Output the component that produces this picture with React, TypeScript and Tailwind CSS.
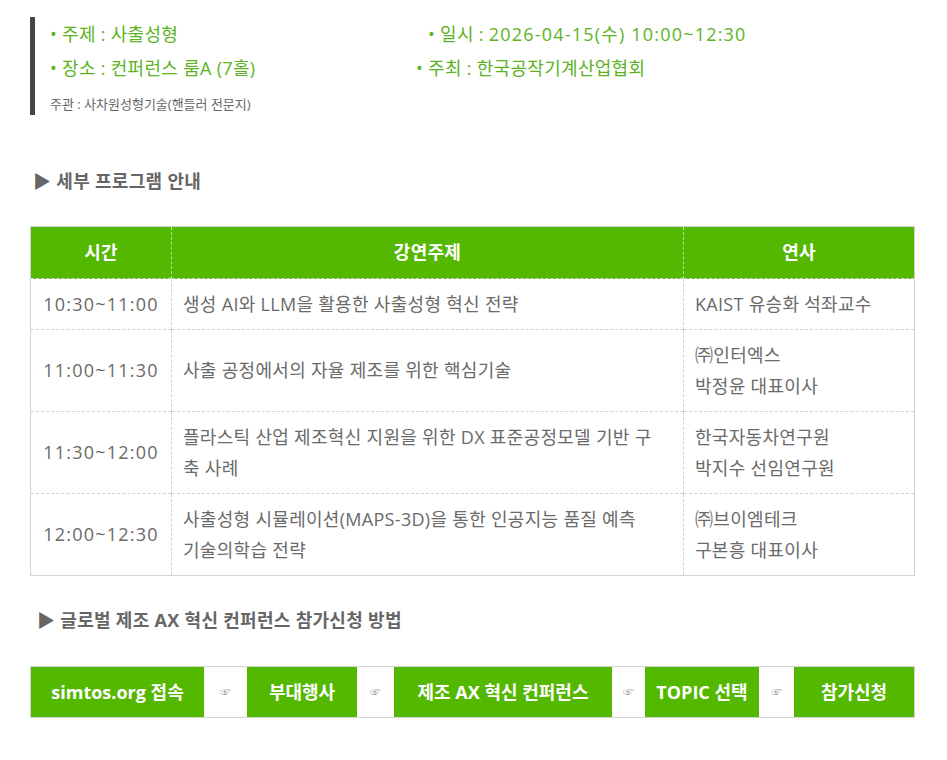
import React from "react";

const font = "font-['Open_Sans','Noto_Sans_CJK_KR',sans-serif]";

const rows = [
  { time: "10:30~11:00", topic: ["생성 AI와 LLM을 활용한 사출성형 혁신 전략"], speaker: ["KAIST 유승화 석좌교수"], h: "h-[51px]" },
  { time: "11:00~11:30", topic: ["사출 공정에서의 자율 제조를 위한 핵심기술"], speaker: ["㈜인터엑스", "박정윤 대표이사"], h: "h-[82px]" },
  { time: "11:30~12:00", topic: ["플라스틱 산업 제조혁신 지원을 위한 DX 표준공정모델 기반 구", "축 사례"], speaker: ["한국자동차연구원", "박지수 선임연구원"], h: "h-[82px]" },
  { time: "12:00~12:30", topic: ["사출성형 시뮬레이션(MAPS-3D)을 통한 인공지능 품질 예측", "기술의학습 전략"], speaker: ["㈜브이엠테크", "구본흥 대표이사"], h: "h-[82px]" },
];

const steps = [
  { label: "simtos.org 접속", w: "w-[173px]" },
  { label: "부대행사", w: "w-[110px]" },
  { label: "제조 AX 혁신 컨퍼런스", w: "w-[218px]" },
  { label: "TOPIC 선택", w: "w-[114px]" },
  { label: "참가신청", w: "flex-1" },
];
const gaps = ["w-[43px]", "w-[37px]", "w-[33px]", "w-[35px]"];

export default function App() {
  return (
    <div className={`${font} bg-white w-[947px] min-h-[760px] pt-[17px] px-[30px] text-[#6a6a6a]`}>
      {/* info box */}
      <div className="border-l-[5px] border-[#464646] pl-[15px] h-[98px] flex flex-col">
        <div className="flex mt-[5px] leading-[24px] text-[18px] text-[#5cb31f] tracking-[0.3px]">
          <span className="w-[378px]">• 주제 : 사출성형</span>
          <span>
            • 일시 : <span className="tracking-[1.2px]">2026-04-15(수) 10:00~12:30</span>
          </span>
        </div>
        <div className="flex mt-[10px] leading-[24px] text-[18px] text-[#5cb31f] tracking-[0.3px]">
          <span className="w-[366px]">• 장소 : 컨퍼런스 룸A (7홀)</span>
          <span>• 주최 : 한국공작기계산업협회</span>
        </div>
        <div className="text-[13px] text-[#666] mt-[17px] leading-[14px]">주관 : 사차원성형기술(핸들러 전문지)</div>
      </div>

      <h3 className="mt-[56px] text-[18px] font-bold text-[#666] leading-[20px] pl-[3px] tracking-[0.3px]">▶ 세부 프로그램 안내</h3>

      {/* program table */}
      <table className="mt-[35px] w-[885px] border-collapse border border-[#d3d3d3] text-[18px] tracking-[0.3px]">
        <thead>
          <tr className="bg-[#54b700] text-white h-[52px]">
            <th className="w-[141px] font-bold text-[18px] border-r border-dashed border-[#b8e08f]">시간</th>
            <th className="w-[512px] font-bold text-[18px] border-r border-dashed border-[#b8e08f]">강연주제</th>
            <th className="font-bold text-[18px]">연사</th>
          </tr>
        </thead>
        <tbody>
          {rows.map((r) => (
            <tr key={r.time} className={`${r.h} border-t border-dashed border-[#d3d3d3]`}>
              <td className="text-center border-r border-dashed border-[#d3d3d3] tracking-[1.2px]">{r.time}</td>
              <td className="px-[11px] border-r border-dashed border-[#d3d3d3] leading-[31px]">
                {r.topic.map((t) => (
                  <div key={t}>{t}</div>
                ))}
              </td>
              <td className="px-[11px] leading-[31px]">
                {r.speaker.map((t) => (
                  <div key={t}>{t}</div>
                ))}
              </td>
            </tr>
          ))}
        </tbody>
      </table>

      <h3 className="mt-[34px] text-[18px] font-bold text-[#666] leading-[20px] pl-[7px] tracking-[0.3px]">▶ 글로벌 제조 AX 혁신 컨퍼런스 참가신청 방법</h3>

      {/* steps */}
      <div className="mt-[36px] flex h-[52px] border border-[#d3d3d3] w-[885px]">
        {steps.map((s, i) => (
          <React.Fragment key={s.label}>
            <div className={`${s.w} bg-[#54b700] text-white font-bold text-[18px] flex items-center justify-center`}>
              {s.label}
            </div>
            {i < gaps.length && (
              <div className={`${gaps[i]} bg-white flex items-center justify-center text-[11px] text-[#999]`}>☞</div>
            )}
          </React.Fragment>
        ))}
      </div>
    </div>
  );
}
